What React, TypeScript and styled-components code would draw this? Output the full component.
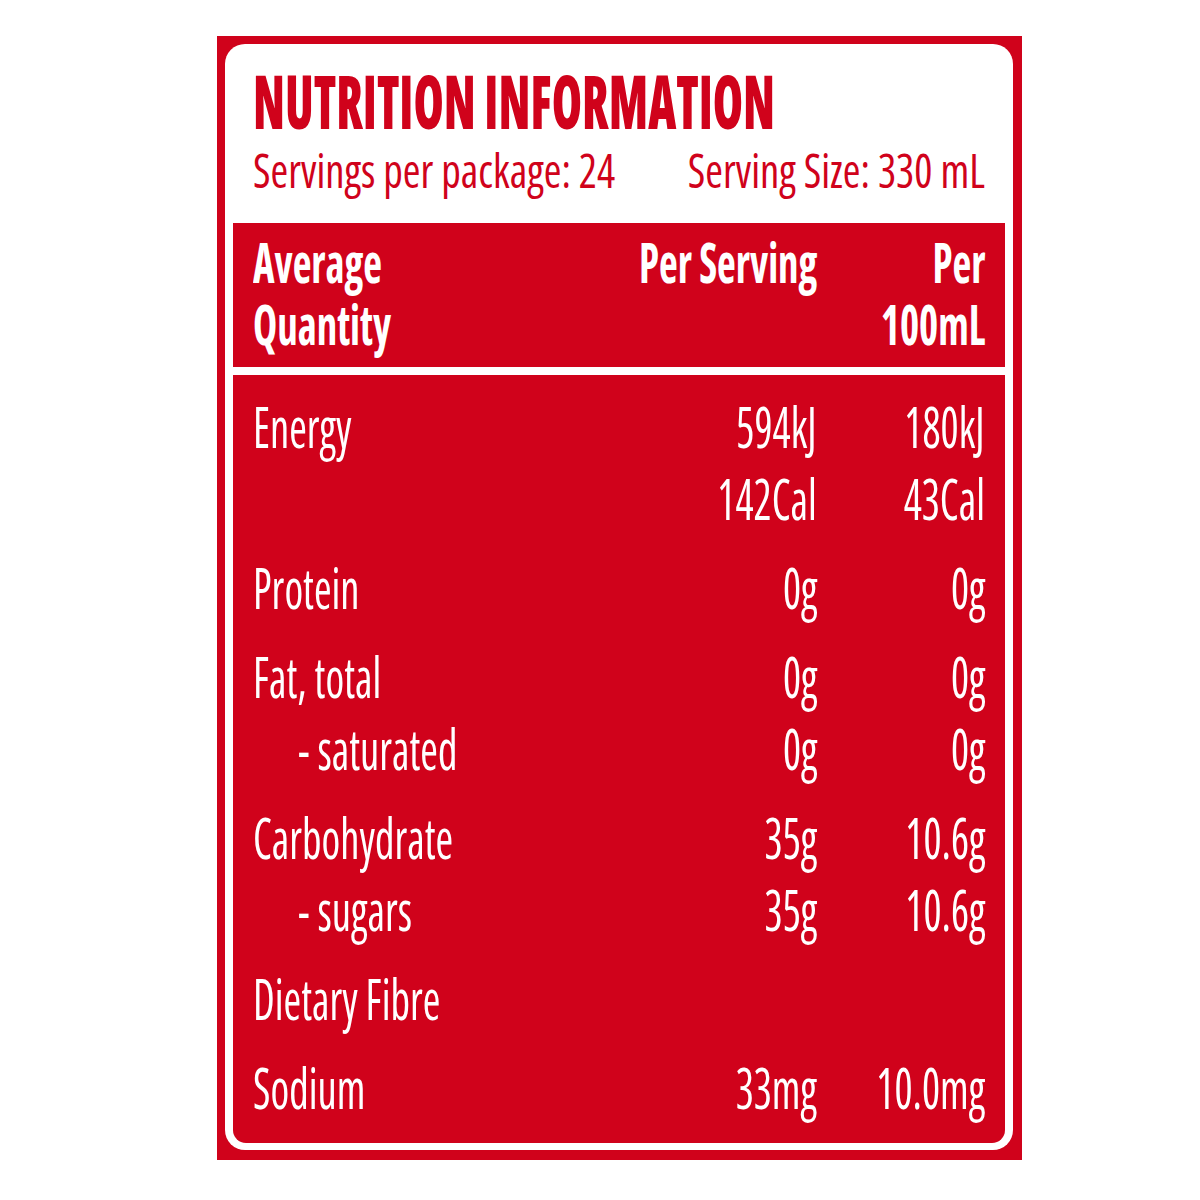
import React from 'react';
import styled, { createGlobalStyle } from 'styled-components';

const RED = '#d0021b';

const GlobalStyle = createGlobalStyle`
  body {
    margin: 0;
    background: #ffffff;
    font-family: "Open Sans", "Noto Sans", sans-serif;
    font-stretch: 75%;
  }
`;

type Row = { label?: string; serving?: string; per100?: string; indent?: boolean };

const groups: Row[][] = [
  [
    { label: 'Energy', serving: '594kJ', per100: '180kJ' },
    { serving: '142Cal', per100: '43Cal' },
  ],
  [{ label: 'Protein', serving: '0g', per100: '0g' }],
  [
    { label: 'Fat, total', serving: '0g', per100: '0g' },
    { label: '- saturated', serving: '0g', per100: '0g', indent: true },
  ],
  [
    { label: 'Carbohydrate', serving: '35g', per100: '10.6g' },
    { label: '- sugars', serving: '35g', per100: '10.6g', indent: true },
  ],
  [{ label: 'Dietary Fibre' }],
  [{ label: 'Sodium', serving: '33mg', per100: '10.0mg' }],
];

const Page = styled.div`
  padding: 36px 0 0 217px;
`;

const Label = styled.div`
  box-sizing: border-box;
  width: 805px;
  height: 1124px;
  padding: 8px 9px 10px 8px;
  background: ${RED};
`;

const Frame = styled.div`
  box-sizing: border-box;
  height: 100%;
  display: flex;
  flex-direction: column;
  padding: 0 8px 7px;
  border-radius: 20px;
  background: #ffffff;
`;

const Header = styled.header`
  padding: 20px 20px 29px;
  color: ${RED};
`;

const Title = styled.h1`
  margin: 0 0 8px;
  font-size: 74px;
  line-height: 74px;
  font-weight: 800;
  white-space: nowrap;
`;

const SubRow = styled.div`
  display: flex;
  font-size: 48px;
  line-height: 48px;
  font-weight: 500;
`;

const SubCell = styled.div<{ $end?: boolean }>`
  flex: 1;
  min-width: 0;
  display: flex;
  justify-content: ${p => (p.$end ? 'flex-end' : 'flex-start')};
`;

// the reference face is a very narrow DIN-like cut; squeeze Open Sans to match
const Squeeze = styled.span<{ $end?: boolean; $scale?: number }>`
  display: inline-block;
  white-space: nowrap;
  transform: scaleX(${p => p.$scale ?? 0.76});
  transform-origin: ${p => (p.$end ? 'right' : 'left')} center;
`;

const TableHead = styled.div`
  display: flex;
  padding: 7px 20px 13px;
  background: ${RED};
  color: #ffffff;
  font-size: 56px;
  line-height: 62px;
  font-weight: 700;
`;

const TableBody = styled.div`
  flex: 1;
  margin-top: 8px;
  padding: 15px 20px 0;
  border-radius: 0 0 13px 13px;
  background: ${RED};
  color: #ffffff;
  font-size: 56px;
  line-height: 72px;
  font-weight: 500;
`;

const Group = styled.div`
  & + & {
    margin-top: 17px;
  }
`;

const Line = styled.div`
  display: flex;
  height: 72px;
`;

const Name = styled.div<{ $indent?: boolean }>`
  flex: 1;
  min-width: 0;
  display: flex;
  padding-left: ${p => (p.$indent ? 45 : 0)}px;
`;

const Value = styled.div<{ $width: number }>`
  width: ${p => p.$width}px;
  flex: none;
  display: flex;
  justify-content: flex-end;
  text-align: right;
`;

const BOLD = 0.73;

export default function App() {
  return (
    <Page>
      <GlobalStyle />
      <Label>
        <Frame>
          <Header>
            <Title>
              <Squeeze $scale={0.66}>NUTRITION INFORMATION</Squeeze>
            </Title>
            <SubRow>
              <SubCell>
                <Squeeze $scale={0.89}>Servings per package: 24</Squeeze>
              </SubCell>
              <SubCell $end>
                <Squeeze $end $scale={0.89}>
                  Serving Size: 330 mL
                </Squeeze>
              </SubCell>
            </SubRow>
          </Header>
          <TableHead>
            <Name>
              <Squeeze $scale={BOLD}>
                Average
                <br />
                Quantity
              </Squeeze>
            </Name>
            <Value $width={200}>
              <Squeeze $end $scale={BOLD}>
                Per Serving
              </Squeeze>
            </Value>
            <Value $width={168}>
              <Squeeze $end $scale={BOLD}>
                Per
                <br />
                100mL
              </Squeeze>
            </Value>
          </TableHead>
          <TableBody>
            {groups.map((rows, gi) => (
              <Group key={gi}>
                {rows.map((row, ri) => (
                  <Line key={ri}>
                    <Name $indent={row.indent}>
                      {row.label && <Squeeze>{row.label}</Squeeze>}
                    </Name>
                    <Value $width={200}>
                      {row.serving && <Squeeze $end>{row.serving}</Squeeze>}
                    </Value>
                    <Value $width={168}>
                      {row.per100 && <Squeeze $end>{row.per100}</Squeeze>}
                    </Value>
                  </Line>
                ))}
              </Group>
            ))}
          </TableBody>
        </Frame>
      </Label>
    </Page>
  );
}
